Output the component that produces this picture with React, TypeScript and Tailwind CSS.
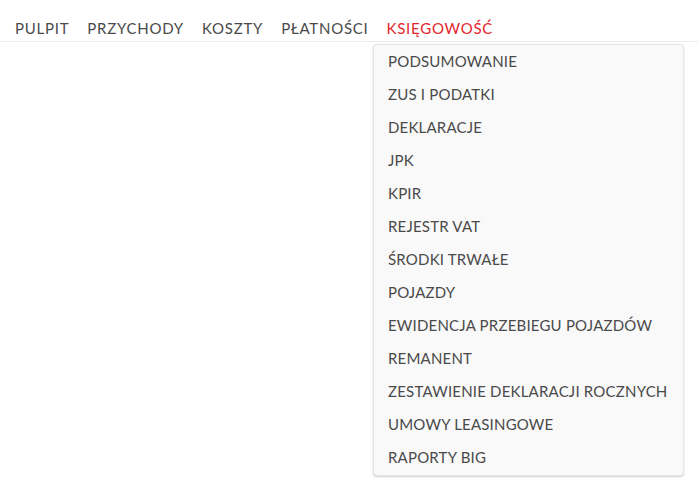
import React from "react";

const nav = ["PULPIT", "PRZYCHODY", "KOSZTY", "PŁATNOŚCI"];
const items = [
  "PODSUMOWANIE",
  "ZUS I PODATKI",
  "DEKLARACJE",
  "JPK",
  "KPIR",
  "REJESTR VAT",
  "ŚRODKI TRWAŁE",
  "POJAZDY",
  "EWIDENCJA PRZEBIEGU POJAZDÓW",
  "REMANENT",
  "ZESTAWIENIE DEKLARACJI ROCZNYCH",
  "UMOWY LEASINGOWE",
  "RAPORTY BIG",
];

export default function App() {
  return (
    <div
      className="w-[698px] h-[496px] bg-white text-[15px] text-[#4a4a4a]"
      style={{ fontFamily: "Lato, 'Open Sans', sans-serif" }}
    >
      <div className="flex h-[42px] items-end border-b border-[#ececec] pl-[15px] pb-[3px] gap-[18px] leading-[20px] tracking-[0.75px]">
        {nav.map((n) => (
          <span key={n}>{n}</span>
        ))}
        <span className="text-[#e3262b]">KSIĘGOWOŚĆ</span>
      </div>
      <div className="flex">
        <div className="ml-[373px] mt-[2px] w-[311px] rounded-[4px] border border-[#e6e6e6] bg-[#f9f9f9] shadow-[0_1px_2px_rgba(0,0,0,0.2)] pb-[1px] tracking-[0.2px]">
          {items.map((i) => (
            <div key={i} className="h-[33px] flex items-center pl-[14px] text-[#4a4a4a]">
              {i}
            </div>
          ))}
        </div>
      </div>
    </div>
  );
}
